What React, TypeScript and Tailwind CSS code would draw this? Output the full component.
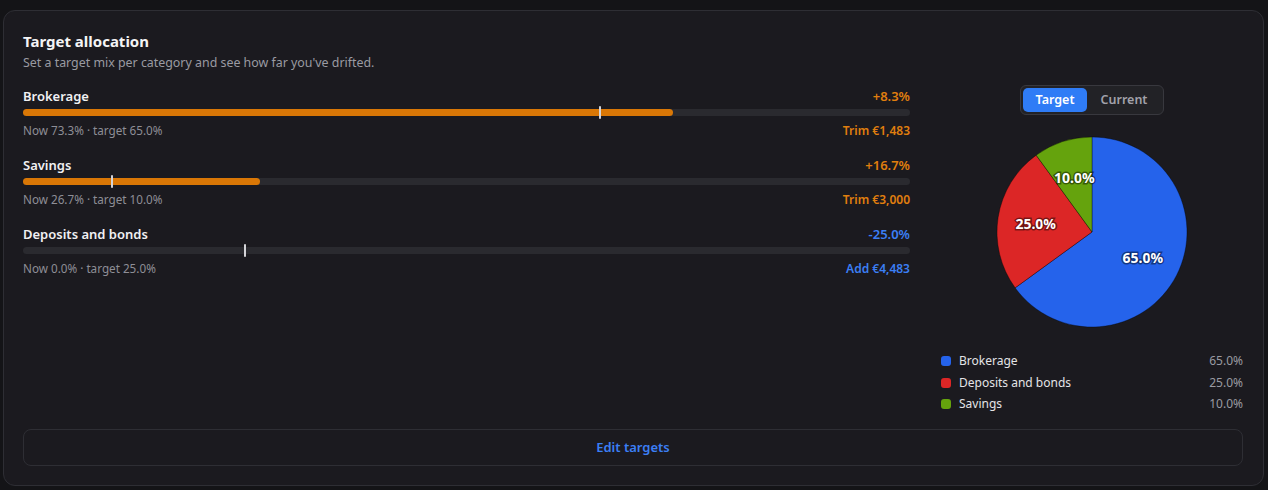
import React from "react";

type Row = {
  name: string;
  now: number;
  target: number;
  drift: string;
  action: string;
  tone: "over" | "under";
};

const rows: Row[] = [
  { name: "Brokerage", now: 73.3, target: 65.0, drift: "+8.3%", action: "Trim €1,483", tone: "over" },
  { name: "Savings", now: 26.7, target: 10.0, drift: "+16.7%", action: "Trim €3,000", tone: "over" },
  { name: "Deposits and bonds", now: 0, target: 25.0, drift: "-25.0%", action: "Add €4,483", tone: "under" },
];

const slices = [
  { name: "Brokerage", value: 65, color: "#2563eb" },
  { name: "Deposits and bonds", value: 25, color: "#dc2626" },
  { name: "Savings", value: 10, color: "#65a30d" },
];

const CX = 96;
const CY = 96;
const R = 95;

function pt(deg: number, r: number) {
  const a = (deg * Math.PI) / 180;
  return [CX + r * Math.sin(a), CY - r * Math.cos(a)];
}

function Pie() {
  let start = 0;
  return (
    <svg width={192} height={192} viewBox="0 0 192 192">
      {slices.map((s) => {
        const sweep = (s.value / 100) * 360;
        const end = start + sweep;
        const [x1, y1] = pt(start, R);
        const [x2, y2] = pt(end, R);
        const large = sweep > 180 ? 1 : 0;
        const d = `M${CX},${CY} L${x1},${y1} A${R},${R} 0 ${large} 1 ${x2},${y2} Z`;
        start = end;
        return <path key={s.name} d={d} fill={s.color} stroke="rgba(0,0,0,0.35)" strokeWidth={1} />;
      })}
      {(() => {
        let st = 0;
        return slices.map((s) => {
          const sweep = (s.value / 100) * 360;
          const [lx, ly] = pt(st + sweep / 2, R * 0.6);
          st += sweep;
          return (
            <text
              key={s.name + "l"}
              x={lx}
              y={ly}
              textAnchor="middle"
              dominantBaseline="central"
              fill="#fff"
              stroke="rgba(0,0,0,0.45)"
              strokeWidth={3}
              paintOrder="stroke"
              className="text-[14px] font-bold"
            >
              {s.value.toFixed(1)}%
            </text>
          );
        });
      })()}
    </svg>
  );
}

function DriftRow({ row }: { row: Row }) {
  const color = row.tone === "over" ? "text-[#e07f0e]" : "text-[#3b7ff5]";
  return (
    <div className="flex flex-col">
      <div className="flex items-center justify-between h-[18px]">
        <span className="text-[13px] font-semibold text-[#f1f1f3]">{row.name}</span>
        <span className={`text-[13px] font-semibold ${color}`}>{row.drift}</span>
      </div>
      <div className="relative mt-[3px] h-[7px] rounded-full bg-[#2a2a2f]">
        {row.now > 0 && (
          <div className="h-full rounded-full bg-[#d97706]" style={{ width: `${row.now}%` }} />
        )}
        <div
          className="absolute top-[-3px] h-[13px] w-[2px] -translate-x-1/2 rounded-sm bg-[#d4d4d8]"
          style={{ left: `${row.target}%` }}
        />
      </div>
      <div className="mt-[7px] flex items-center justify-between h-[16px]">
        <span className="text-[11.7px] text-[#8e8e96]">
          Now {row.now.toFixed(1)}% · target {row.target.toFixed(1)}%
        </span>
        <span className={`text-[12px] font-semibold ${color}`}>{row.action}</span>
      </div>
    </div>
  );
}

export default function App() {
  return (
    <div
      className="min-h-[490px] bg-[#141417] pt-[10px] pl-[3px] pr-[4px]"
      style={{ fontFamily: '"Noto Sans", "Open Sans", sans-serif' }}
    >
      <div className="h-[476px] rounded-[12px] border border-[#2e2e34] bg-[#1b1a1f] pl-[19px] pr-[20px] pt-[20px] flex flex-col">
        <h2 className="text-[15px] font-bold leading-[20px] text-[#f4f4f5]">Target allocation</h2>
        <p className="mt-[3px] text-[12.4px] leading-[18px] text-[#9a9aa2]">
          Set a target mix per category and see how far you've drifted.
        </p>
        <div className="mt-[13px] flex gap-[31px]">
          <div className="flex flex-1 flex-col gap-[18px] pt-[3px]">
            {rows.map((r) => (
              <DriftRow key={r.name} row={r} />
            ))}
          </div>
          <div className="w-[302px] flex flex-col items-center">
            <div className="flex rounded-md border border-[#38383e] bg-[#222226] p-[2px]">
              <button className="h-[24px] w-[64px] rounded-[5px] bg-[#2f7cf6] text-[12.5px] font-semibold text-white">
                Target
              </button>
              <button className="h-[24px] w-[74px] rounded-[5px] text-[12.5px] font-semibold text-[#a1a1aa]">
                Current
              </button>
            </div>
            <div className="mt-[21px]">
              <Pie />
            </div>
            <div className="mt-[25px] w-full flex flex-col gap-[5.5px]">
              {slices.map((s) => (
                <div key={s.name} className="flex items-center justify-between h-[16px]">
                  <div className="flex items-center gap-[8px]">
                    <span className="h-[10px] w-[10px] rounded-[3px]" style={{ background: s.color }} />
                    <span className="text-[12px] text-[#e4e4e7]">{s.name}</span>
                  </div>
                  <span className="text-[12px] text-[#9a9aa2]">{s.value.toFixed(1)}%</span>
                </div>
              ))}
            </div>
          </div>
        </div>
        <button className="mt-[17px] h-[37px] w-full rounded-[8px] border border-[#2e2e34] text-[13px] font-semibold text-[#3b7ff5]">
          Edit targets
        </button>
      </div>
    </div>
  );
}
